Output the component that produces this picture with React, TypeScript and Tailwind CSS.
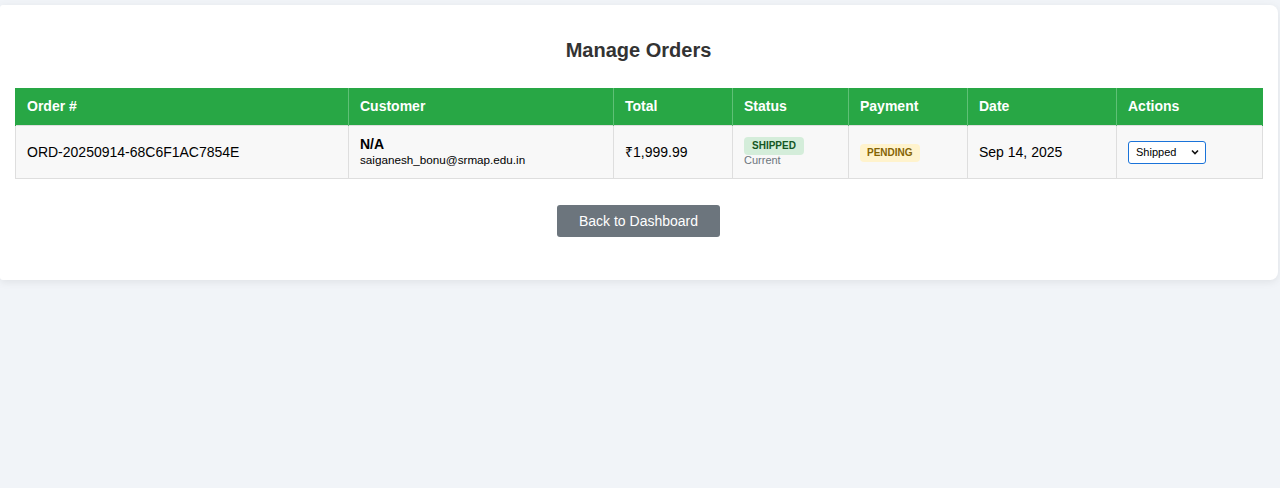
import React from "react";

export default function App() {
  const th = "bg-[#28a745] text-white font-bold text-[14px] text-left px-[11px] py-[10px] leading-[17px] border-x border-[#5fc076]";
  const td = "px-[11px] py-0 text-[14px] text-black border border-[#dedede] align-middle";
  return (
    <div className="min-h-[488px] bg-[#f1f4f8] pt-[5px]" style={{ fontFamily: "Arial, 'Liberation Sans', sans-serif" }}>
      <div className="mr-[2px] bg-white rounded-r-[8px] rounded-l-[3px] shadow-[0_2px_8px_rgba(0,0,0,0.08)] pl-[15px] pr-[16px] pt-[30px] pb-[43px]">
        <h2 className="text-center text-[20px] font-bold text-[#333] leading-[30px] mb-[23px]">Manage Orders</h2>
        <table className="w-full table-fixed border-collapse">
          <colgroup>
            <col className="w-[333px]" />
            <col className="w-[265px]" />
            <col className="w-[119px]" />
            <col className="w-[116px]" />
            <col className="w-[119px]" />
            <col className="w-[149px]" />
            <col className="w-[146px]" />
          </colgroup>
          <thead>
            <tr>
              <th className={th + " border-l-[#28a745]"}>Order #</th>
              <th className={th}>Customer</th>
              <th className={th}>Total</th>
              <th className={th}>Status</th>
              <th className={th}>Payment</th>
              <th className={th}>Date</th>
              <th className={th + " border-r-[#28a745]"}>Actions</th>
            </tr>
          </thead>
          <tbody>
            <tr className="bg-[#f8f8f8] h-[53px]">
              <td className={td}>ORD-20250914-68C6F1AC7854E</td>
              <td className={td}>
                <div className="font-bold text-[14px] leading-[16px] mt-[-1px]">N/A</div>
                <div className="text-[11.7px] leading-[14px] mt-[1px]">saiganesh_bonu@srmap.edu.in</div>
              </td>
              <td className={td}>₹1,999.99</td>
              <td className={td}>
                <div className="flex flex-col items-start">
                  <span className="block bg-[#d4edda] text-[#155724] text-[10px] font-bold px-[8px] py-[3px] rounded-[4px] leading-[12px]">SHIPPED</span>
                  <div className="text-[11px] text-[#6c757d] leading-[13px] mt-[-1px]">Current</div>
                </div>
              </td>
              <td className={td}>
                <span className="inline-block align-middle bg-[#fff3cd] text-[#856404] text-[10px] font-bold px-[7px] py-[3px] rounded-[4px] leading-[12px]">PENDING</span>
              </td>
              <td className={td}>Sep 14, 2025</td>
              <td className={td}>
                <div className="w-[78px] h-[23px] border-[1.5px] border-[#1a73d9] rounded-[3px] bg-white flex items-center justify-between pl-[7px] pr-[5px]">
                  <span className="text-[11px] text-black leading-none">Shipped</span>
                  <svg width="10" height="10" viewBox="0 0 10 10"><path d="M2 3.5 L5 6.5 L8 3.5" fill="none" stroke="#111" strokeWidth="1.6" /></svg>
                </div>
              </td>
            </tr>
          </tbody>
        </table>
        <div className="flex justify-center mt-[26px]">
          <button className="h-[32px] px-[22px] bg-[#6c757d] text-white text-[14px] rounded-[3px]">Back to Dashboard</button>
        </div>
      </div>
    </div>
  );
}
